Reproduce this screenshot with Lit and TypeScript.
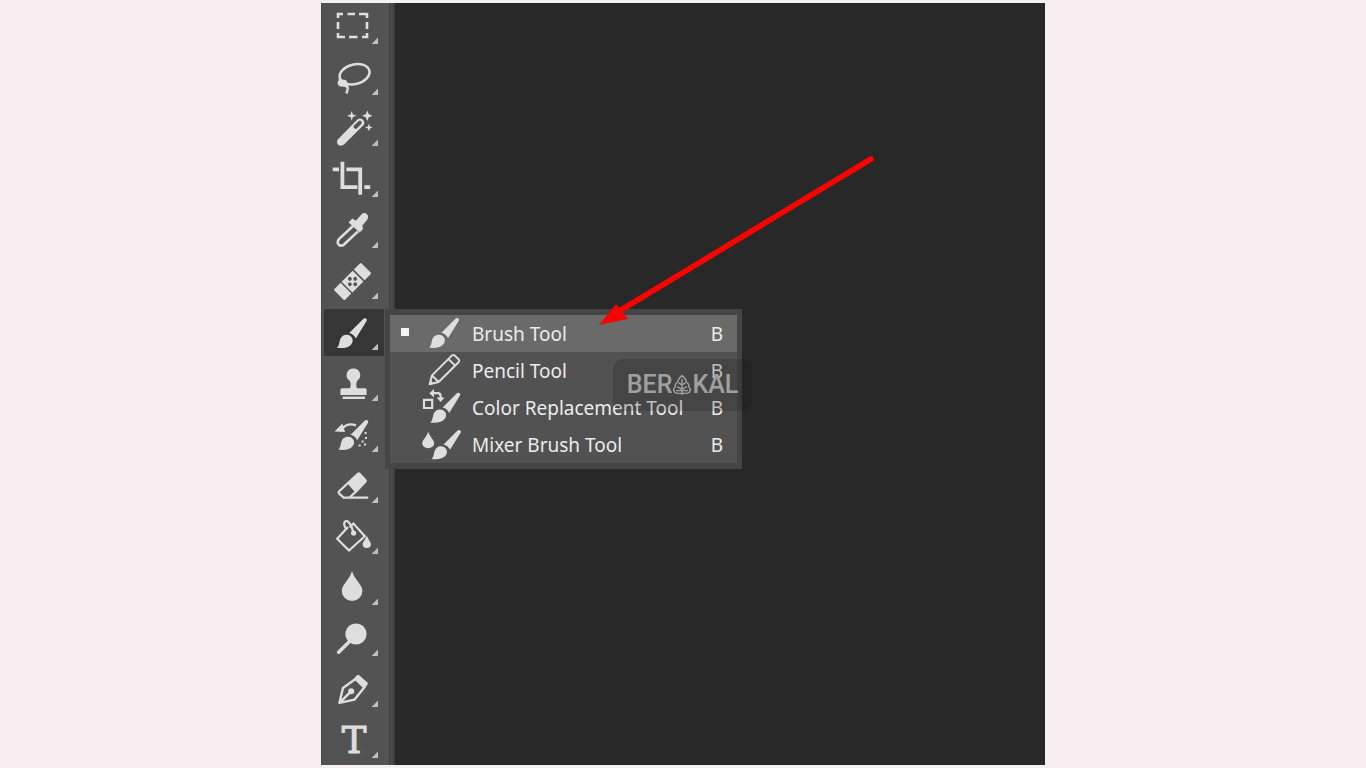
import { LitElement, html, svg, css } from "lit";
import { customElement, state } from "lit/decorators.js";

const brush = svg`
  <path d="M0 30C3.4 27.4 1.8 22.4 5 19C8.4 15.8 13.6 16.8 15.4 20.4C17.4 25.4 13 31.8 0 30Z"/>
  <path d="M12.4 15.2L26.4 1.2C28-.6 31 .8 29.8 3.2L19 20.6C17.8 18 15.6 15.8 12.4 15.2Z"/>`;

const drop = svg`<path d="M0 0C1.6 6 5 9 5 12.4A5 5 0 0 1-5 12.4C-5 9-1.6 6 0 0Z"/>`;

const toolIcons: Record<string, unknown> = {
  marquee: svg`<g class="line" stroke-width="2.6">
    <path d="M14 15V11H19M23.5 11H31M35 11H43V15M43 19V26M43 30V34H38M33.5 34H25M21 34H14V30M14 26V19"/></g>`,
  lasso: svg`<g class="line" stroke-width="2.5">
    <ellipse cx="30.6" cy="20.2" rx="15.2" ry="9.8" transform="rotate(-14 30.6 20.2)"/>
    <ellipse cx="18.4" cy="29" rx="3.6" ry="2.2"/>
    <path d="M16 31.8L20.4 28.6C24 31 24.4 35 22.4 39.6M15.6 24.4C16 28 18 31 22.4 32.4"/></g>`,
  wand: svg`
    <path d="M14 34.2L33.4 14.6C37 11.2 42.6 16.6 39.4 20.2L20 39.6C15.6 42.8 11 38.4 14 34.2Z"/>
    <path class="hole" d="M30 20.6L34.4 16.4C36.2 14.8 38.8 17.2 37.2 19L32.8 23.6C30.6 24.6 28.8 22.6 30 20.6Z"/>
    <path d="M27.7 6l1.2 3.6 3.6 1.1-3.6 1.2-1.2 3.6-1.2-3.6-3.6-1.2 3.6-1.1zM43.3 5.5l1.5 3.8 3.8 1.4-3.8 1.5-1.5 3.8-1.5-3.8-3.8-1.5 3.8-1.4zM44.9 18.6l1 2.8 2.8 1-2.8 1-1 2.8-1-2.8-2.8-1 2.8-1z"/>`,
  crop: svg`<g class="line" stroke-width="3.8">
    <path d="M8.7 13.3H15M18.4 5.7V31.2H33.4M40.4 31.2H46.2M22.4 13.3H36.2V38.8"/></g>`,
  eyedropper: svg`
    <path class="line" stroke-width="2.6" d="M29 19L15.2 31.8C13.2 34 13.2 36.8 15 38C16.8 39 19.2 38.4 20.8 36.8L34 24.4"/>
    <path d="M24.6 15.4L28.4 11.6L31.8 13.8L37.4 7.4C41 3.8 46 8.4 43.4 12.6L38.4 18.4L39 22L35.6 25.4Z"/>`,
  bandage: svg`<g transform="translate(28.4 23.4) rotate(-45)">
    <path d="M-18-7.4H-9.4V7.8H-18Q-19.2 7.8-19.2 6.6V-6.2Q-19.2-7.4-18-7.4ZM9.4-7.4H18Q19.2-7.4 19.2-6.2V6.6Q19.2 7.8 18 7.8H9.4ZM-7.8-7.4H7.8V7.8H-7.8Z"/>
    <g class="hole"><circle cx="-3.8" cy=".2" r="1.9"/><circle cx="3.8" cy=".2" r="1.9"/><circle cx="0" cy="-3.6" r="1.9"/><circle cx="0" cy="4" r="1.9"/></g></g>`,
  brush: svg`<g transform="translate(12.8 8.8)">${brush}</g>`,
  stamp: svg`
    <path d="M29.4 8.4A6.6 6.6 0 0 1 33.4 20.4C32 22.6 32 25.4 33 28.2H41Q42.6 28.2 42.6 30V35H16.4V30Q16.4 28.2 18 28.2H26C27 25.4 27 22.6 25.4 20.4A6.6 6.6 0 0 1 29.4 8.4Z"/>
    <path d="M18.6 36.6H41V39H18.6Z"/>`,
  history: svg`
    <g transform="translate(14.2 8.6)">${brush}</g>
    <path d="M10.6 20.4L18.4 12.6L21 21Z"/>
    <path class="line" stroke-width="2.2" d="M19 17C22 13.6 27 12.6 32 14.4"/>
    <path d="M40.6 21h2v2h-2zM41 26h2v2h-2zM37.6 29.4h2v2h-2zM40 32.4h2v2h-2zM34.6 33.4h2v2h-2z"/>`,
  eraser: svg`
    <path d="M22.8 20.8L33.4 10.8Q34.8 9.6 36 10.8L42.4 17.6Q43.6 18.8 42.4 20.2L32 31.2Z"/>
    <path class="line" stroke-width="2.2" d="M24 21L15 29.4Q14.2 30.4 15 31.4L19.6 35.6H44.2M31.4 30L25.6 35.6"/>`,
  bucket: svg`
    <path class="line" stroke-width="2.2" d="M24 14L13.2 25.8L25 37.6L40.8 23.2L29.4 10.6L25.6 14.2M22 16C18.4 10 21 6.4 24 8.6C26.8 10.8 28 14 29.2 19"/>
    <circle cx="29.6" cy="20" r="2.6"/>
    <g transform="translate(42.8 22.4) scale(.84 .72)">${drop}</g>`,
  blur: svg`<path d="M28 7C30.2 15.6 38.4 20.2 38.4 26.8A10.2 10.2 0 0 1 17.8 26.8C17.8 20.2 25.8 15.6 28 7Z"/>`,
  dodge: svg`<circle cx="32" cy="19" r="10.6"/>
    <path class="line" stroke-width="3.6" stroke-linecap="round" d="M26 26L14.6 37.2"/>`,
  pen: svg`
    <path class="line" stroke-width="2.4" stroke-linejoin="round" d="M15.4 36.8L19 22L31.4 13L40.2 21.4L30.6 33.6ZM16 36.4L26 26.4"/>
    <circle cx="27.2" cy="25.2" r="3"/>
    <path d="M30 12.6L33 9.2Q34 8.4 35.2 9.2L43.4 16.6Q44.2 17.8 43.4 18.8L40.8 22.4Z"/>`,
  type: svg`<text class="letter" x="30" y="36" text-anchor="middle">T</text>`,
};

const menuIcons: Record<string, unknown> = {
  brush: svg`<g transform="translate(9 2.6)">${brush}</g>`,
  pencil: svg`<g class="line" stroke-width="2" stroke-linejoin="round">
    <path d="M9.6 32.2L12 23.4L32 3.4Q33.4 2.4 34.8 3.6L38.8 7.4Q39.8 8.6 38.8 10L18.6 30ZM28.4 7L35.2 13.6M12 23.4L18.6 30"/></g>
    <path d="M9 33L10.4 28L14 31.6Z"/>`,
  replace: svg`<g transform="translate(10.2 3.4)">${brush}</g>
    <path class="line" stroke-width="2.2" d="M4 10.8H12.2V19H4ZM12.6 4.2H17.6Q20.6 4.2 20.6 7.2V9"/>
    <path d="M9.4 4.2L14 0V8.4ZM16.6 8.4H24.6L20.6 13Z"/>`,
  mixer: svg`<g transform="translate(11.4 3.6) scale(.98)">${brush}</g>
    <g transform="translate(8.2 5.8) scale(1.2 .94)">${drop}</g>`,
};

const tools = [
  ["marquee", "Rectangular Marquee Tool"],
  ["lasso", "Lasso Tool"],
  ["wand", "Magic Wand Tool"],
  ["crop", "Crop Tool"],
  ["eyedropper", "Eyedropper Tool"],
  ["bandage", "Healing Brush Tool"],
  ["brush", "Brush Tool"],
  ["stamp", "Clone Stamp Tool"],
  ["history", "History Brush Tool"],
  ["eraser", "Eraser Tool"],
  ["bucket", "Paint Bucket Tool"],
  ["blur", "Blur Tool"],
  ["dodge", "Dodge Tool"],
  ["pen", "Pen Tool"],
  ["type", "Type Tool"],
];

const variants = [
  ["brush", "Brush Tool"],
  ["pencil", "Pencil Tool"],
  ["replace", "Color Replacement Tool"],
  ["mixer", "Mixer Brush Tool"],
];

@customElement("tool-flyout")
export class ToolFlyout extends LitElement {
  @state() private current = "brush";

  static styles = css`
    :host { display: block; padding: 6px 5px; background: #454545; }
    .list { display: flex; flex-direction: column; background: #525252; }
    .item {
      display: grid;
      grid-template-columns: 8px 44px 1fr auto;
      align-items: center;
      height: 37px;
      padding: 0 14px 2px 11px;
      border: 0;
      background: none;
      color: #ececec;
      font: 19px/24px "Noto Sans", "Open Sans", sans-serif;
      text-align: left;
      white-space: nowrap;
    }
    .item.on { background: #6a6a6a; }
    .mark { width: 8px; height: 8px; margin-bottom: 4px; }
    .on .mark { background: #f4f4f4; }
    .icon { width: 44px; height: 37px; margin-left: 11px; fill: #dedede; overflow: visible; }
    .line { fill: none; stroke: #dedede; }
    .name { padding-left: 19px; }
  `;

  render() {
    return html`<div class="list" role="menu">
      ${variants.map(([id, name]) => html`
        <button class="item ${id === this.current ? "on" : ""}" role="menuitem" @click=${() => (this.current = id)}>
          <span class="mark"></span>
          <svg class="icon" viewBox="0 0 44 37" aria-hidden="true">${menuIcons[id]}</svg>
          <span class="name">${name}</span>
          <span>B</span>
        </button>`)}
    </div>`;
  }
}

@customElement("app-root")
export class AppRoot extends LitElement {
  static styles = css`
    :host {
      display: flex;
      justify-content: center;
      height: 100vh;
      background: #f7eef1;
      overflow: hidden;
    }
    .frame { box-sizing: border-box; width: 53vw; min-width: 440px; padding: 3px 0; background: #f3f1f2; }
    .window { position: relative; display: flex; height: 100%; background: #282828; }
    .tools {
      display: flex;
      flex-direction: column;
      gap: 4px;
      padding: 0 5px 0 2px;
      background: #535353;
      border-left: 1px solid #484848;
      border-right: 2px solid #434343;
    }
    .rail { width: 4px; background: linear-gradient(90deg, #505050, #3a3a3a); }
    .slot { position: relative; height: 47px; }
    .tool { display: block; width: 60px; height: 47px; padding: 0; border: 0; background: none; }
    .tool.on { background: #363636; border-radius: 2px; }
    .icon { display: block; fill: #dedede; }
    .line { fill: none; stroke: #dedede; }
    .hole { fill: #535353; }
    .letter { font: 37px "DejaVu Serif", serif; stroke: #dedede; stroke-width: 1; }
    .corner { fill: #c0c0c0; }
    .flyout { position: absolute; top: 0; left: 61px; width: 347px; }
    .arrow { position: absolute; top: 150px; left: 276px; width: 280px; height: 176px; }
    .badge {
      position: absolute;
      top: 356px;
      left: 292px;
      display: flex;
      align-items: center;
      justify-content: center;
      width: 139px;
      height: 52px;
      border-radius: 10px;
      background: rgba(20, 20, 20, 0.2);
      color: #a0a0a0;
      font: 500 25px/30px Roboto, sans-serif;
    }
    .tree { width: 20px; height: 22px; fill: none; stroke: #a0a0a0; stroke-width: 1.4; }
  `;

  render() {
    return html`<main class="frame"><div class="window">
      <nav class="tools" aria-label="Tools">
        ${tools.map(([id, name]) => html`<div class="slot">
          <button class="tool ${id === "brush" ? "on" : ""}" aria-label=${name}>
            <svg class="icon" viewBox="0 0 60 47" width="60" height="47" aria-hidden="true">
              ${toolIcons[id]}<path class="corner" d="M54 34.6V41H47.6Z"/>
            </svg>
          </button>
          ${id === "brush" ? html`<tool-flyout class="flyout"></tool-flyout>` : ""}
        </div>`)}
      </nav>
      <div class="rail"></div>
      <svg class="arrow" viewBox="0 0 280 176" aria-hidden="true">
        <path d="M274 6L24 157" stroke="#f80400" stroke-width="5.6" stroke-linecap="round"/>
        <path d="M2 172L19 151L31 166Z" fill="#f80400"/>
      </svg>
      <div class="badge">
        <span>BER</span>
        <svg class="tree" viewBox="0 0 20 22" aria-hidden="true">
          <path d="M10 1.6C7.6 3.4 6 5 5.6 8C3.4 9.4 3 11.4 3 13C.8 15 1.6 19 5 19.4H15C18.4 19 19.2 15 17 13C17 11.4 16.6 9.4 14.4 8C14 5 12.4 3.4 10 1.6ZM10 5V21M10 11L6.4 8.6M10 11L13.6 8.6M10 15.4L5 12.6M10 15.4L15 12.6M4 16.6H16"/>
        </svg>
        <span>KAL</span>
      </div>
    </div></main>`;
  }
}
